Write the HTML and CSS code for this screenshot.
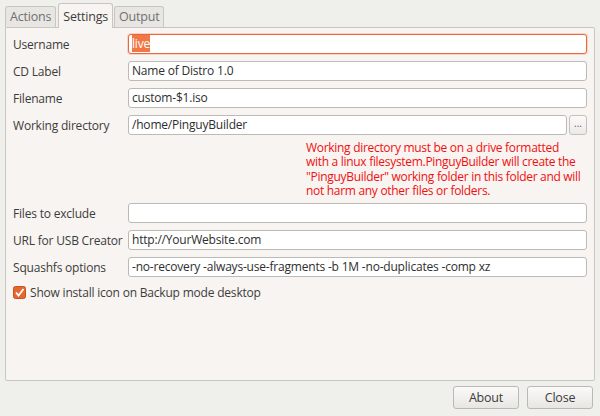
FILE: index.html
```html
<!DOCTYPE html>
<html>
	<head>
		<meta charset="utf-8">
		<link rel="stylesheet" href="styles.css">
	</head>
	<body>
		<div class="tabBar">
			<div class="tab">Actions</div>
			<div class="tab active">Settings</div>
			<div class="tab">Output</div>
		</div>

		<div class="panel">
			<div class="row">
				<label>Username</label>
				<div class="field focused"><span class="selected">live</span></div>
			</div>
			<div class="row">
				<label>CD Label</label>
				<div class="field">Name of Distro 1.0</div>
			</div>
			<div class="row">
				<label>Filename</label>
				<div class="field">custom-$1.iso</div>
			</div>
			<div class="row">
				<label>Working directory</label>
				<div class="field">/home/PinguyBuilder</div>
				<div class="browse">...</div>
			</div>

			<div class="warning">
				Working directory must be on a drive formatted<br>
				with a linux filesystem.PinguyBuilder will create the<br>
				"PinguyBuilder" working folder in this folder and will<br>
				not harm any other files or folders.
			</div>

			<div class="row">
				<label>Files to exclude</label>
				<div class="field"></div>
			</div>
			<div class="row">
				<label>URL for USB Creator</label>
				<div class="field">http://YourWebsite.com</div>
			</div>
			<div class="row">
				<label>Squashfs options</label>
				<div class="field">-no-recovery -always-use-fragments -b 1M -no-duplicates -comp xz</div>
			</div>

			<div class="checkRow">
				<svg class="check" width="13" height="13" viewBox="0 0 13 13">
					<rect x="0.5" y="0.5" width="12" height="12" rx="2" fill="#e3672f" stroke="#c4531f"/>
					<path d="M3 6.5 L5.5 9.5 L10.5 3" fill="none" stroke="#fff" stroke-width="1.8"/>
				</svg>
				<span>Show install icon on Backup mode desktop</span>
			</div>
		</div>

		<div class="buttonBar">
			<div class="button">About</div>
			<div class="button">Close</div>
		</div>
	</body>
</html>
```

FILE: styles.css
```css
body {
	margin: 0;
	width: 600px;
	height: 416px;
	background-color: #efefeb;
	font-family: "Open Sans", "DejaVu Sans", sans-serif;
	font-size: 12px;
	letter-spacing: -0.2px;
	color: #3c3c3c;
	overflow: hidden;
}

.tabBar {
	display: flex;
	align-items: flex-end;
	height: 27px;
	padding-left: 5px;
}
.tab {
	height: 20px;
	line-height: 20px;
	padding: 0 4px;
	margin-right: 1px;
	border: 1px solid #c9c6c2;
	border-bottom: none;
	border-radius: 3px 3px 0 0;
	background-color: #e8e6e2;
	color: #707070;
	font-size: 12.5px;
}
.tab.active {
	height: 24px;
	line-height: 26px;
	margin: 0 1px 0 1px;
	background-color: #f8f4f1;
	color: #3c3c3c;
	position: relative;
	top: 1px;
}

.panel {
	margin: 0 5px;
	height: 346px;
	padding: 6px 7px 0 7px;
	background-color: #f8f4f1;
	border: 1px solid #c9c6c2;
	border-radius: 0 2px 2px 2px;
}

.row {
	display: flex;
	align-items: center;
	height: 20px;
	margin-bottom: 7px;
}
.row label {
	width: 115px;
	flex: none;
}
.field {
	flex: 1;
	height: 18px;
	line-height: 18px;
	padding: 0 3px;
	background-color: #ffffff;
	border: 1px solid #bdbab6;
	border-radius: 3px;
	white-space: nowrap;
	overflow: hidden;
	color: #2e2e2e;
}
.field.focused {
	border-color: #e9673a;
	box-shadow: 0 0 0 1px rgba(240, 120, 70, 0.25);
}
.selected {
	background-color: #f07746;
	color: #ffffff;
}
.browse {
	flex: none;
	width: 16px;
	height: 18px;
	margin-left: 2px;
	line-height: 14px;
	text-align: center;
	letter-spacing: 0;
	border: 1px solid #c4c1bd;
	border-radius: 3px;
	background: linear-gradient(#fbfaf9, #eceae7);
	color: #5a5a7a;
	font-size: 10px;
}

.warning {
	margin: -1px 0 5px 293px;
	line-height: 14.3px;
	color: #f01010;
	font-size: 12px;
	letter-spacing: -0.3px;
	white-space: nowrap;
}

.checkRow {
	display: flex;
	align-items: center;
	height: 20px;
	margin-top: -2px;
}
.check {
	margin-right: 4px;
}

.buttonBar {
	display: flex;
	justify-content: flex-end;
	gap: 8px;
	padding: 5px 7px 0 0;
}
.button {
	width: 64px;
	height: 21px;
	line-height: 21px;
	text-align: center;
	border: 1px solid #bcb9b5;
	border-radius: 3px;
	background: linear-gradient(#fbfaf9, #e8e6e3);
	color: #3c3c3c;
	font-size: 12.5px;
}
```
